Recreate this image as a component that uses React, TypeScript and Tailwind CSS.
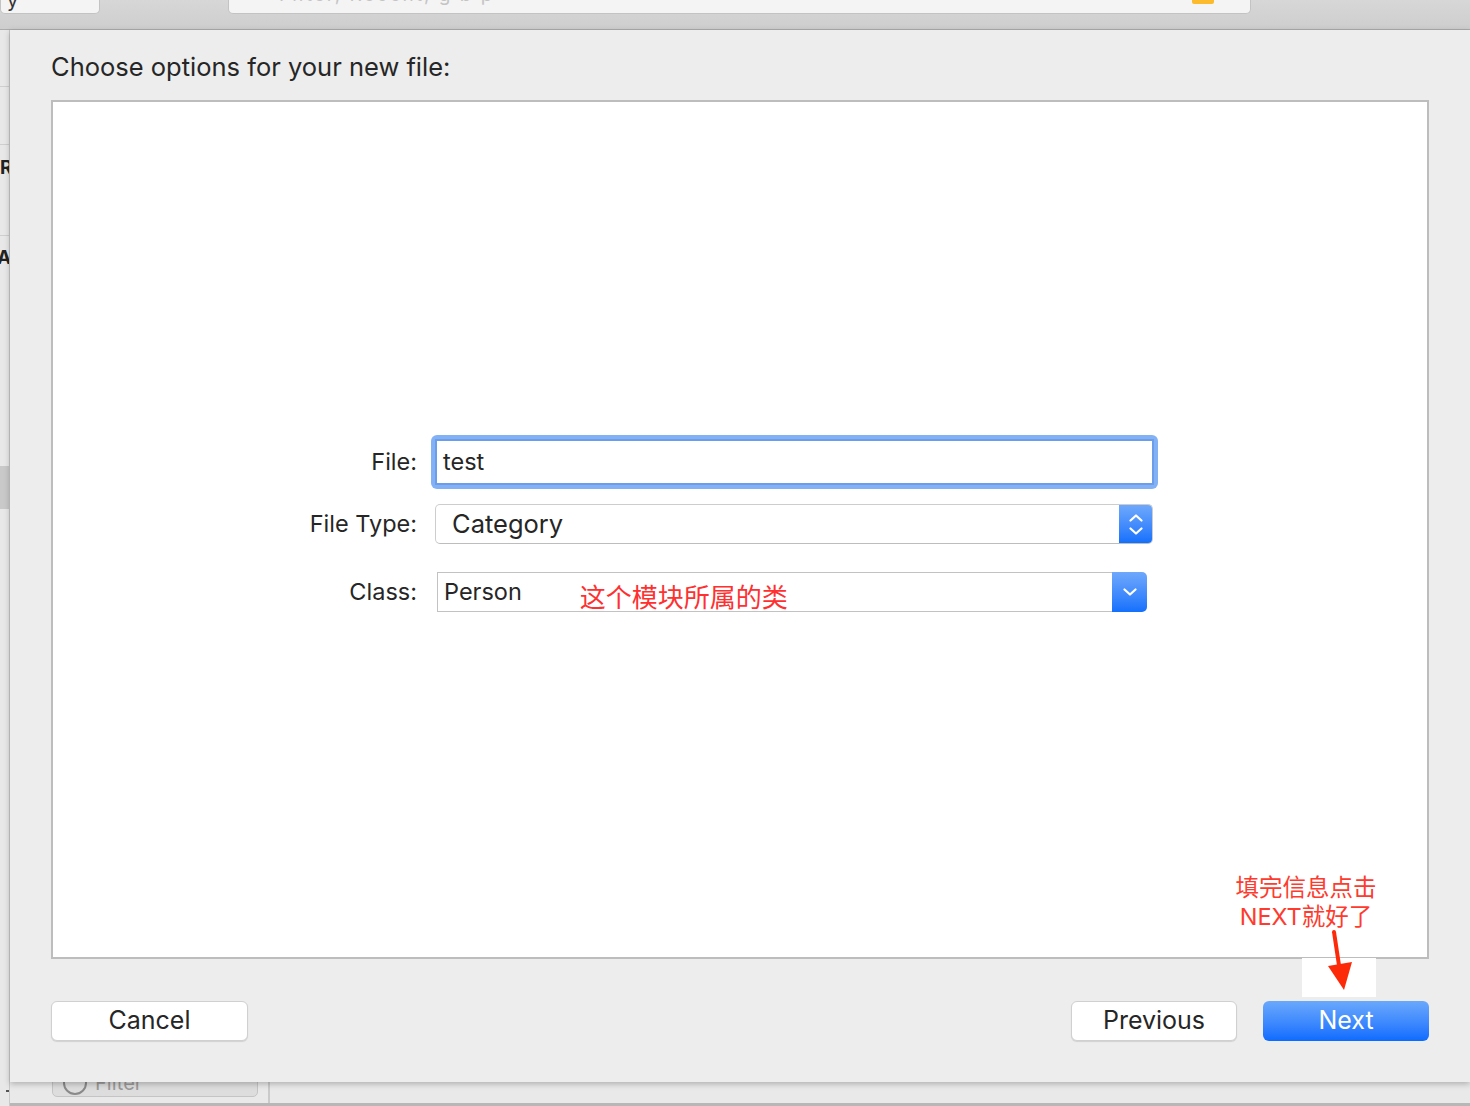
import React from 'react';

const font = { fontFamily: 'Inter, "Noto Sans CJK SC", sans-serif' };

const Chevron = ({ dir }: { dir: 'up' | 'down' }) => (
  <svg width="14" height="8" viewBox="0 0 14 8" fill="none">
    <path
      d={dir === 'up' ? 'M1.5 6.5 L7 1.5 L12.5 6.5' : 'M1.5 1.5 L7 6.5 L12.5 1.5'}
      stroke="white"
      strokeWidth="2.2"
      strokeLinecap="round"
      strokeLinejoin="round"
    />
  </svg>
);

const TopBar = () => (
  <div className="h-[30px] shrink-0 flex items-start bg-gradient-to-b from-[#d7d7d7] to-[#cecece] border-b border-[#acacac]">
    <div className="w-[100px] h-[14px] bg-[#f4f4f4] rounded-b-[5px] border border-t-0 border-[#c3c3c3] overflow-hidden relative">
      <span className="absolute left-[6px] -top-[15px] text-[20px] text-[#333]">y</span>
    </div>
    <div className="ml-[128px] w-[1023px] h-[14px] bg-[#f4f4f4] rounded-b-[5px] border border-t-0 border-[#c3c3c3] overflow-hidden relative flex">
      <span className="absolute left-[50px] -top-[19px] text-[19px] text-[#c4c4c4] tracking-[2px]">Filter, Recent, g  b  p</span>
      <div className="absolute left-[963px] top-0 w-[22px] h-[4px] bg-[#fcbb2c] rounded-b-[2px]" />
    </div>
  </div>
);

const LeftStrip = () => (
  <div className="w-[10px] shrink-0 bg-[#e8e8e8] border-r border-[#c9c9c9] flex flex-col overflow-hidden">
    <div className="h-[57px] shrink-0 border-b border-[#cfcfcf]" />
    <div className="h-[58px] shrink-0 border-b border-[#cfcfcf]" />
    <div className="h-[44px] shrink-0 flex items-center text-[19px] font-bold text-[#222] leading-none">R</div>
    <div className="h-[47px] shrink-0 border-b border-[#cfcfcf]" />
    <div className="h-[42px] shrink-0 flex items-center text-[19px] font-bold text-[#222] leading-none -ml-[3px]">A</div>
    <div className="h-[188px] shrink-0" />
    <div className="h-[43px] shrink-0 bg-[#c9c9c9]" />
    <div className="flex-1" />
    <div className="h-[30px] shrink-0 flex items-start pt-[14px] pl-[6px]">
      <div className="w-[4px] h-[2px] bg-[#555]" />
    </div>
  </div>
);

const Form = () => (
  <div className="pt-[333px] flex flex-col text-[#262626]">
    <div className="flex items-center h-[54px]">
      <div className="w-[364px] text-right text-[23.5px]">File:</div>
      <div className="ml-[14px] w-[727px] h-[54px] rounded-[6px] bg-[#82b1f6] p-[4px]">
        <div className="h-full bg-white border-[2px] border-[#6b9de8] flex items-center pl-[6px] text-[23.5px]">
          test
        </div>
      </div>
    </div>

    <div className="flex items-center h-[40px] mt-[15px]">
      <div className="w-[364px] text-right text-[23.5px]">File Type:</div>
      <div className="ml-[18px] w-[718px] h-[40px] rounded-[5px] bg-white border border-[#cdcdcd] border-b-[#bdbdbd] flex items-stretch overflow-hidden">
        <div className="flex-1 flex items-center pl-[16px] text-[25.5px]">Category</div>
        <div className="w-[33px] bg-gradient-to-b from-[#6ea8fb] to-[#1270fc] flex flex-col items-center justify-center gap-[5px]">
          <Chevron dir="up" />
          <Chevron dir="down" />
        </div>
      </div>
    </div>

    <div className="flex items-center h-[40px] mt-[28px]">
      <div className="w-[364px] text-right text-[23.5px]">Class:</div>
      <div className="ml-[20px] w-[710px] h-[40px] flex items-stretch">
        <div className="flex-1 bg-white border border-[#c2c2c2] border-r-0 flex items-center pl-[6px]">
          <span className="text-[23.5px]">Person</span>
          <span className="ml-[58px] mt-[12px] text-[26px] leading-none text-[#fe3030]">这个模块所属的类</span>
        </div>
        <div className="w-[35px] rounded-r-[5px] bg-gradient-to-b from-[#6ea8fb] to-[#1270fc] flex items-center justify-center">
          <Chevron dir="down" />
        </div>
      </div>
    </div>
  </div>
);

const Sheet = () => (
  <div className="h-[1052px] shrink-0 bg-[#ededed] px-[41px] flex flex-col shadow-[0_2px_6px_rgba(0,0,0,0.25)] relative z-10">
    <div className="h-[70px] flex items-center pt-[4px] text-[25.5px] text-[#262626]">
      Choose options for your new file:
    </div>
    <div className="h-[859px] bg-white border-2 border-[#bdbdbd]">
      <Form />
    </div>
    <div className="mt-[42px] flex items-center">
      <button className="w-[197px] h-[40px] rounded-[6px] bg-white border border-[#d0d0d0] shadow-[0_1px_1px_rgba(0,0,0,0.12)] text-[25px] text-[#262626]">
        Cancel
      </button>
      <div className="flex-1" />
      <button className="w-[166px] h-[40px] rounded-[6px] bg-white border border-[#d0d0d0] shadow-[0_1px_1px_rgba(0,0,0,0.12)] text-[25px] text-[#262626]">
        Previous
      </button>
      <button className="ml-[26px] w-[166px] h-[40px] rounded-[6px] bg-gradient-to-b from-[#6aa8fb] to-[#0a6bfe] text-[25px] text-white">
        Next
      </button>
    </div>
  </div>
);

const BottomArea = () => (
  <div className="flex-1 flex items-start bg-[#e9e9e9] border-b-[3px] border-[#b7b7b7]">
    <div className="ml-[42px] w-[206px] h-[15px] overflow-hidden">
      <div className="-mt-[14px] h-[29px] rounded-[5px] bg-[#dddddd] border border-[#c4c4c4] flex items-center pl-[10px] gap-[8px]">
        <div className="w-[24px] h-[24px] rounded-full border-2 border-[#8a8a8a]" />
        <span className="text-[20px] text-[#9a9a9a]">Filter</span>
      </div>
    </div>
    <div className="ml-[10px] w-[2px] h-full bg-[#cacaca]" />
  </div>
);

const Annotation = () => (
  <>
    <div className="absolute left-[1221px] top-[873px] w-[170px] text-center text-[23.5px] leading-[29px] text-[#fe3b2e]">
      <div>填完信息点击</div>
      <div>NEXT就好了</div>
    </div>
    <svg className="absolute left-[1300px] top-[928px] z-20" width="80" height="72" viewBox="0 0 80 72">
      <rect x="2" y="30" width="74" height="39" fill="white" />
      <path d="M34 4 L40 44" stroke="#fd2a0a" strokeWidth="4" strokeLinecap="round" />
      <path d="M28 38 L52 34 L44 62 Z" fill="#fd2a0a" />
    </svg>
  </>
);

export default function App() {
  return (
    <div className="relative w-[1470px] h-[1106px] overflow-hidden bg-[#e6e6e6] flex flex-col" style={font}>
      <TopBar />
      <div className="flex flex-1 min-h-0">
        <LeftStrip />
        <div className="flex-1 flex flex-col">
          <Sheet />
          <BottomArea />
        </div>
      </div>
      <div className="absolute inset-0 pointer-events-none z-20">
        <Annotation />
      </div>
    </div>
  );
}
